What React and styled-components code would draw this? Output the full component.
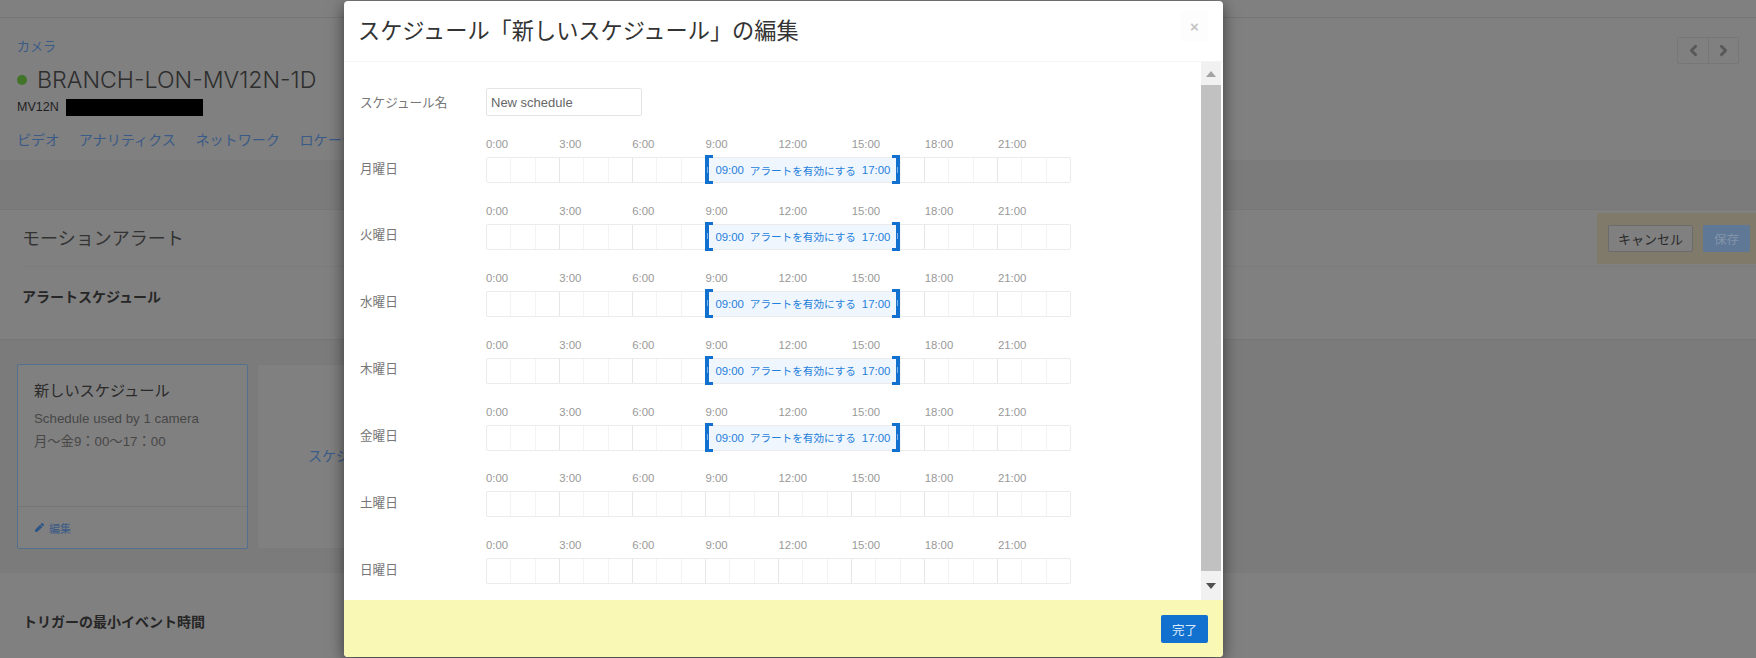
import React from 'react';
import styled, { createGlobalStyle } from 'styled-components';
import { ChevronLeft, ChevronRight } from 'lucide-react';
import { FaPen } from 'react-icons/fa';

const sans = `"Liberation Sans", "Noto Sans CJK JP", sans-serif`;
const HOUR = 24.375;

const GlobalStyle = createGlobalStyle`
  html, body {
    margin: 0;
    height: 658px;
    overflow: hidden;
    background: #808080;
    font-family: ${sans};
  }
  * { box-sizing: border-box; }
`;

const Page = styled.div`
  position: relative;
  width: 1756px;
  height: 658px;
  overflow: hidden;
  background: #808080;
  color: #2a2a2a;
`;

const TopStrip = styled.div`
  height: 18px;
  border-bottom: 1px solid #767676;
`;

const CameraHeader = styled.header`
  display: flex;
  justify-content: space-between;
  height: 142px;
  padding: 20px 17px 0;
`;

const Crumb = styled.div`
  font-size: 13px;
  line-height: 18px;
  color: #3a5a87;
`;

const TitleRow = styled.div`
  display: flex;
  align-items: center;
  gap: 10px;
  margin-top: 9px;
  height: 30px;
`;

const StatusDot = styled.span`
  width: 10px;
  height: 10px;
  border-radius: 50%;
  background: #417329;
`;

const CameraName = styled.h1`
  margin: 0;
  font-family: "Inter", ${sans};
  font-size: 23.2px;
  font-weight: 300;
  color: #2e2e2e;
`;

const ModelRow = styled.div`
  display: flex;
  align-items: center;
  gap: 7px;
  height: 18px;
  margin-top: 3px;
  font-size: 12.5px;
  color: #1f1f1f;
`;

const Redacted = styled.span`
  width: 137px;
  height: 17px;
  background: #000;
`;

const Tabs = styled.nav`
  display: flex;
  gap: 19.5px;
  margin-top: 14px;
  font-size: 14.1px;
  line-height: 20px;
  color: #3a5a87;
`;

const Pager = styled.div`
  display: flex;
  height: 27px;
  margin: -1px 0 0;
  border: 1px solid #777;
  border-radius: 2px;
`;

const PagerButton = styled.span`
  display: flex;
  align-items: center;
  justify-content: center;
  width: 30px;
  color: #585858;
  & + & {
    border-left: 1px solid #777;
  }
`;

const Band = styled.div`
  height: 50px;
  background: #7b7b7b;
  border-bottom: 1px solid #777;
`;

const AlertHead = styled.div`
  display: flex;
  justify-content: space-between;
  align-items: flex-start;
  height: 57px;
  margin-left: 22px;
  border-bottom: 1px solid #7b7b7b;
`;

const AlertTitle = styled.h2`
  margin: 14px 0 0;
  font-size: 18px;
  line-height: 30px;
  font-weight: 400;
  color: #333;
`;

const ActionBox = styled.div`
  display: flex;
  gap: 10px;
  width: 159px;
  height: 51px;
  margin-top: 3px;
  padding: 12px 6px 0 11px;
  background: #7f7a69;
`;

const CancelButton = styled.span`
  display: flex;
  align-items: center;
  justify-content: center;
  width: 85px;
  height: 27px;
  border: 1px solid #6b6b6b;
  border-radius: 2px;
  background: #808080;
  font-size: 13px;
  color: #2a2a2a;
`;

const SaveButton = styled.span`
  display: flex;
  align-items: center;
  justify-content: center;
  width: 47px;
  height: 27px;
  border-radius: 2px;
  background: #5f7896;
  font-size: 12.5px;
  color: #8494a8;
`;

const SubHead = styled.h3`
  margin: 0;
  height: 72px;
  padding: 20px 0 0 22px;
  font-size: 14px;
  line-height: 20px;
  font-weight: 700;
  color: #262626;
`;

const CardArea = styled.section`
  display: flex;
  gap: 9px;
  height: 234px;
  padding: 24px 17px 0;
  background: #7b7b7b;
  border-top: 1px solid #767676;
`;

const Card = styled.div`
  display: flex;
  flex-direction: column;
  width: 231px;
  height: 185px;
  border: 1px solid #54708f;
  border-radius: 2px;
  background: #808080;
`;

const CardBody = styled.div`
  flex: 1;
  padding: 15px 16px 0;
  border-bottom: 1px solid #767676;
`;

const CardTitle = styled.div`
  font-size: 15.2px;
  line-height: 22px;
  color: #2a2a2a;
`;

const CardLine = styled.div`
  margin-top: ${p => p.$gap}px;
  font-size: 13.3px;
  line-height: 18px;
  color: #474747;
`;

const CardFoot = styled.div`
  display: flex;
  align-items: center;
  gap: 5px;
  height: 41px;
  padding-left: 17px;
  font-size: 11px;
  color: #3a5a87;
`;

const EmptyCard = styled.div`
  display: flex;
  align-items: center;
  width: 260px;
  height: 185px;
  padding: 0 0 4px 50px;
  border: 1px solid #7a7a7a;
  border-radius: 2px;
  background: #808080;
  font-size: 14px;
  color: #3a5a87;
  white-space: nowrap;
`;

const TriggerHead = styled.h3`
  margin: 0;
  padding: 39px 0 0 23px;
  font-size: 14px;
  line-height: 20px;
  font-weight: 700;
  color: #262626;
`;

/* dialog on top of the dimmed page */
const Modal = styled.div`
  position: absolute;
  left: 344px;
  top: 1px;
  display: flex;
  flex-direction: column;
  width: 879px;
  height: 656px;
  overflow: hidden;
  border-radius: 4px;
  background: #fff;
  box-shadow: 0 4px 16px rgba(0, 0, 0, 0.55);
`;

const ModalHead = styled.div`
  display: flex;
  justify-content: space-between;
  align-items: flex-start;
  height: 61px;
  padding: 0 15px 0 14px;
  border-bottom: 1px solid #f5f5f5;
`;

const ModalTitle = styled.h2`
  margin: 16px 0 0;
  font-size: 22.2px;
  line-height: 30px;
  font-weight: 400;
  color: #333;
`;

const CloseButton = styled.span`
  display: flex;
  justify-content: center;
  width: 27px;
  height: 30px;
  margin-top: 10px;
  background: #fdfdfd;
  font-size: 15px;
  line-height: 32px;
  font-weight: 700;
  color: #c4c4c4;
`;

const ModalMiddle = styled.div`
  display: flex;
  height: 538px;
  padding-right: 2px;
`;

const ModalContent = styled.div`
  flex: 1;
  padding: 26px 0 0 16px;
  overflow: hidden;
`;

const NameRow = styled.div`
  display: flex;
  align-items: center;
  margin-bottom: 21px;
`;

const FieldLabel = styled.label`
  width: 126px;
  padding-bottom: ${p => p.$lift}px;
  font-size: 12.6px;
  color: #777;
`;

const NameInput = styled.input`
  width: 156px;
  height: 28px;
  padding: 0 4px;
  border: 1px solid #e4e4e4;
  border-radius: 2px;
  outline: none;
  font-family: ${sans};
  font-size: 13px;
  color: #666;
`;

const DayRow = styled.div`
  display: grid;
  grid-template-columns: 126px 585px;
  grid-template-rows: 14px 26px;
  row-gap: 6px;
  margin-bottom: 20.9px;
  align-items: center;
`;

const Ticks = styled.div`
  grid-column: 2;
  display: flex;
`;

const Tick = styled.span`
  width: ${HOUR * 3}px;
  font-size: 11.4px;
  line-height: 14px;
  color: #999;
`;

const Timeline = styled.div`
  position: relative;
  display: flex;
  height: 26px;
  border: 1px solid #ebebeb;
  border-radius: 2px;
`;

const HourCell = styled.span`
  flex: 1;
  border-left: 1px solid ${p => (p.$major ? '#e6e6e6' : '#f3f3f3')};
  &:first-child {
    border-left: 0;
  }
`;

const Selection = styled.div`
  position: absolute;
  left: ${p => p.$start * HOUR - 1}px;
  width: ${p => (p.$end - p.$start) * HOUR}px;
  top: 0;
  bottom: 0;
  display: flex;
  align-items: center;
  justify-content: space-between;
  padding: 0 10px;
  background: #f0f6fd;
  color: #1f7fdb;
  font-size: 11.4px;
  white-space: nowrap;
`;

const SelectionText = styled.span`
  font-size: 10.6px;
`;

const Bracket = styled.span`
  position: absolute;
  top: -3px;
  bottom: -2px;
  ${p => (p.$side === 'left' ? 'left: 0;' : 'right: 0;')}
  width: 8px;
  ${p => `border-${p.$side}: 4px solid #1270cf;`}
  border-top: 3px solid #1270cf;
  border-bottom: 3px solid #1270cf;

  &::after {
    content: '';
    position: absolute;
    top: 50%;
    ${p => (p.$side === 'left' ? 'left: -2px;' : 'right: -2px;')}
    width: 1px;
    height: 6px;
    margin-top: -3px;
    background: #7fb0e6;
  }
`;

const ScrollTrack = styled.div`
  display: flex;
  flex-direction: column;
  width: 20px;
`;

const ScrollButton = styled.div`
  display: flex;
  align-items: center;
  justify-content: center;
  height: ${p => p.$h}px;
  background: #f1f1f1;
`;

const Arrow = styled.span`
  width: 0;
  height: 0;
  border-left: 5px solid transparent;
  border-right: 5px solid transparent;
  ${p => (p.$up ? 'border-bottom: 6px solid #a3a3a3;' : 'border-top: 6px solid #505050;')}
`;

const ScrollThumb = styled.div`
  flex: 1;
  background: #c1c1c1;
`;

const ModalFoot = styled.div`
  display: flex;
  justify-content: flex-end;
  flex: 1;
  padding: 15px 15px 0 0;
  background: #f9f9b5;
`;

const DoneButton = styled.span`
  display: flex;
  align-items: center;
  justify-content: center;
  width: 47px;
  height: 28px;
  border-radius: 2px;
  background: #1270cf;
  font-size: 12.5px;
  color: #dcebfa;
`;

const days = [
  { name: '月曜日', on: true },
  { name: '火曜日', on: true },
  { name: '水曜日', on: true },
  { name: '木曜日', on: true },
  { name: '金曜日', on: true },
  { name: '土曜日', on: false },
  { name: '日曜日', on: false },
];

const tickHours = [0, 3, 6, 9, 12, 15, 18, 21];
const hours = Array.from({ length: 24 }, (_, i) => i);

function ScheduleDay({ name, on }) {
  return (
    <DayRow>
      <Ticks>
        {tickHours.map(h => <Tick key={h}>{h}:00</Tick>)}
      </Ticks>
      <FieldLabel $lift={6}>{name}</FieldLabel>
      <Timeline>
        {hours.map(h => <HourCell key={h} $major={h % 3 === 0} />)}
        {on && (
          <Selection $start={9} $end={17}>
            <Bracket $side="left" />
            <span>09:00</span>
            <SelectionText>アラートを有効にする</SelectionText>
            <span>17:00</span>
            <Bracket $side="right" />
          </Selection>
        )}
      </Timeline>
    </DayRow>
  );
}

export default function App() {
  return (
    <Page>
      <GlobalStyle />
      <TopStrip />
      <CameraHeader>
        <div>
          <Crumb>カメラ</Crumb>
          <TitleRow>
            <StatusDot />
            <CameraName>BRANCH-LON-MV12N-1D</CameraName>
          </TitleRow>
          <ModelRow>MV12N <Redacted /></ModelRow>
          <Tabs>
            <span>ビデオ</span>
            <span>アナリティクス</span>
            <span>ネットワーク</span>
            <span>ロケーション</span>
          </Tabs>
        </div>
        <Pager>
          <PagerButton><ChevronLeft size={17} strokeWidth={4} /></PagerButton>
          <PagerButton><ChevronRight size={17} strokeWidth={4} /></PagerButton>
        </Pager>
      </CameraHeader>
      <Band />
      <AlertHead>
        <AlertTitle>モーションアラート</AlertTitle>
        <ActionBox>
          <CancelButton>キャンセル</CancelButton>
          <SaveButton>保存</SaveButton>
        </ActionBox>
      </AlertHead>
      <SubHead>アラートスケジュール</SubHead>
      <CardArea>
        <Card>
          <CardBody>
            <CardTitle>新しいスケジュール</CardTitle>
            <CardLine $gap={8}>Schedule used by 1 camera</CardLine>
            <CardLine $gap={5}>月〜金9：00〜17：00</CardLine>
          </CardBody>
          <CardFoot><FaPen size={9} color="#2f5587" /> 編集</CardFoot>
        </Card>
        <EmptyCard>スケジュールを追加</EmptyCard>
      </CardArea>
      <TriggerHead>トリガーの最小イベント時間</TriggerHead>

      <Modal>
        <ModalHead>
          <ModalTitle>スケジュール「新しいスケジュール」の編集</ModalTitle>
          <CloseButton>×</CloseButton>
        </ModalHead>
        <ModalMiddle>
          <ModalContent>
            <NameRow>
              <FieldLabel $lift={2}>スケジュール名</FieldLabel>
              <NameInput readOnly value="New schedule" />
            </NameRow>
            {days.map(d => <ScheduleDay key={d.name} name={d.name} on={d.on} />)}
          </ModalContent>
          <ScrollTrack>
            <ScrollButton $h={23}><Arrow $up /></ScrollButton>
            <ScrollThumb />
            <ScrollButton $h={29}><Arrow /></ScrollButton>
          </ScrollTrack>
        </ModalMiddle>
        <ModalFoot>
          <DoneButton>完了</DoneButton>
        </ModalFoot>
      </Modal>
    </Page>
  );
}
